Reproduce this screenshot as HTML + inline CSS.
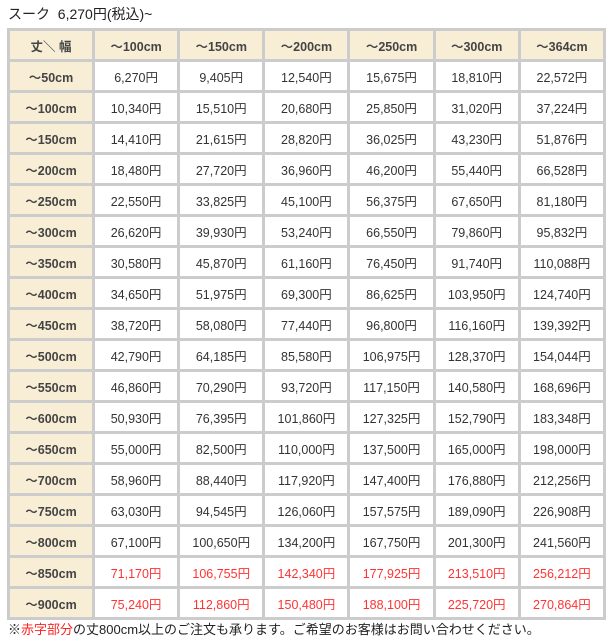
<!DOCTYPE html>
<html><head><meta charset="utf-8"><style>
body{margin:0;background:#fff;font-family:"Liberation Sans","Noto Sans CJK JP",sans-serif;color:#333;}
.t{position:absolute;left:8px;top:4px;font-size:14px;color:#222;}
table{position:absolute;left:7px;top:28px;border-collapse:collapse;width:599px;table-layout:fixed;}
td,th{border:3px solid #ccc;height:28px;padding:0;text-align:center;font-size:12.5px;}
th{background:#f8eed6;font-weight:bold;color:#444;}
td{font-weight:normal;}
.r td{color:#f33;}
.n{position:absolute;left:8px;top:619px;font-size:13px;color:#222;white-space:nowrap;}
.n span{color:#f22;}
</style></head><body>
<div class="t">スーク&nbsp; 6,270円(税込)~</div>
<table>
<colgroup><col style="width:85px"><col><col><col><col><col><col></colgroup>
<tr><th>丈＼ 幅</th><th>～100cm</th><th>～150cm</th><th>～200cm</th><th>～250cm</th><th>～300cm</th><th>～364cm</th></tr>
<tr><th>～50cm</th><td>6,270円</td><td>9,405円</td><td>12,540円</td><td>15,675円</td><td>18,810円</td><td>22,572円</td></tr>
<tr><th>～100cm</th><td>10,340円</td><td>15,510円</td><td>20,680円</td><td>25,850円</td><td>31,020円</td><td>37,224円</td></tr>
<tr><th>～150cm</th><td>14,410円</td><td>21,615円</td><td>28,820円</td><td>36,025円</td><td>43,230円</td><td>51,876円</td></tr>
<tr><th>～200cm</th><td>18,480円</td><td>27,720円</td><td>36,960円</td><td>46,200円</td><td>55,440円</td><td>66,528円</td></tr>
<tr><th>～250cm</th><td>22,550円</td><td>33,825円</td><td>45,100円</td><td>56,375円</td><td>67,650円</td><td>81,180円</td></tr>
<tr><th>～300cm</th><td>26,620円</td><td>39,930円</td><td>53,240円</td><td>66,550円</td><td>79,860円</td><td>95,832円</td></tr>
<tr><th>～350cm</th><td>30,580円</td><td>45,870円</td><td>61,160円</td><td>76,450円</td><td>91,740円</td><td>110,088円</td></tr>
<tr><th>～400cm</th><td>34,650円</td><td>51,975円</td><td>69,300円</td><td>86,625円</td><td>103,950円</td><td>124,740円</td></tr>
<tr><th>～450cm</th><td>38,720円</td><td>58,080円</td><td>77,440円</td><td>96,800円</td><td>116,160円</td><td>139,392円</td></tr>
<tr><th>～500cm</th><td>42,790円</td><td>64,185円</td><td>85,580円</td><td>106,975円</td><td>128,370円</td><td>154,044円</td></tr>
<tr><th>～550cm</th><td>46,860円</td><td>70,290円</td><td>93,720円</td><td>117,150円</td><td>140,580円</td><td>168,696円</td></tr>
<tr><th>～600cm</th><td>50,930円</td><td>76,395円</td><td>101,860円</td><td>127,325円</td><td>152,790円</td><td>183,348円</td></tr>
<tr><th>～650cm</th><td>55,000円</td><td>82,500円</td><td>110,000円</td><td>137,500円</td><td>165,000円</td><td>198,000円</td></tr>
<tr><th>～700cm</th><td>58,960円</td><td>88,440円</td><td>117,920円</td><td>147,400円</td><td>176,880円</td><td>212,256円</td></tr>
<tr><th>～750cm</th><td>63,030円</td><td>94,545円</td><td>126,060円</td><td>157,575円</td><td>189,090円</td><td>226,908円</td></tr>
<tr><th>～800cm</th><td>67,100円</td><td>100,650円</td><td>134,200円</td><td>167,750円</td><td>201,300円</td><td>241,560円</td></tr>
<tr class="r"><th>～850cm</th><td>71,170円</td><td>106,755円</td><td>142,340円</td><td>177,925円</td><td>213,510円</td><td>256,212円</td></tr>
<tr class="r"><th>～900cm</th><td>75,240円</td><td>112,860円</td><td>150,480円</td><td>188,100円</td><td>225,720円</td><td>270,864円</td></tr>
</table>
<div class="n">※<span>赤字部分</span>の丈800cm以上のご注文も承ります。ご希望のお客様はお問い合わせください。</div>
</body></html>
